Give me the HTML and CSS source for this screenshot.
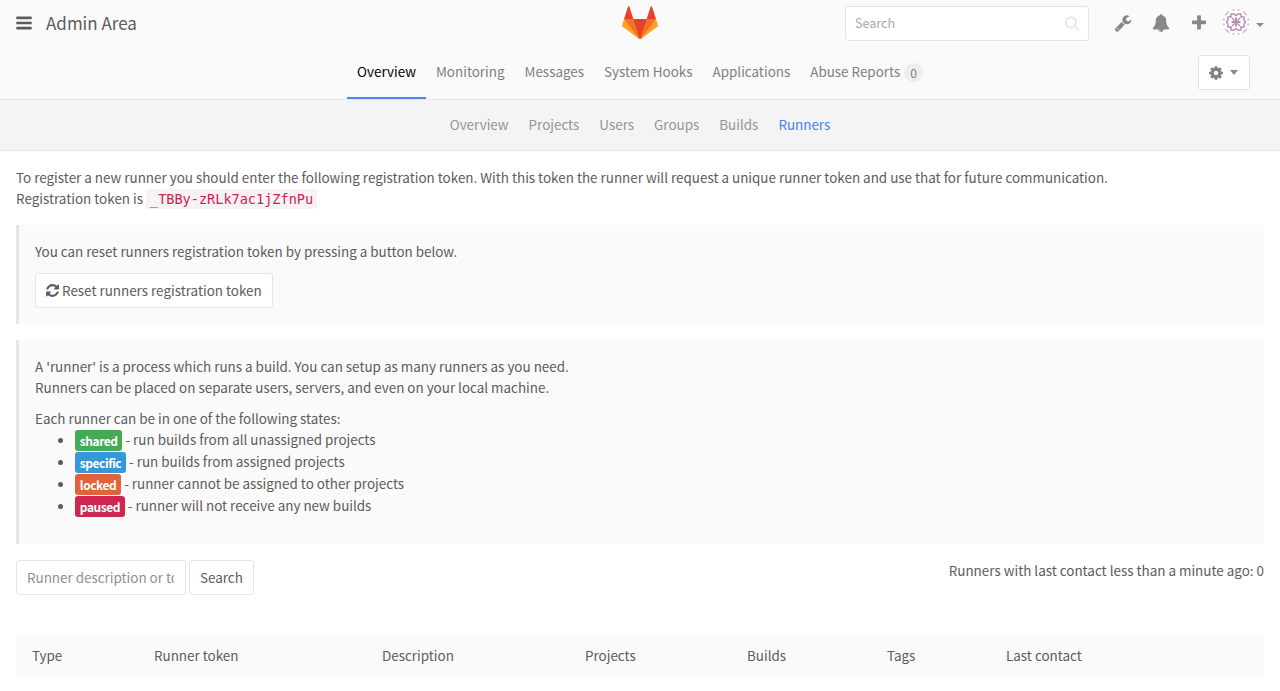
FILE: index.html
```html
<!DOCTYPE html>
<html lang="en">
<head>
<meta charset="utf-8">
<title>Runners · Admin Area</title>
<link rel="stylesheet" href="styles.css">
</head>
<body>
<header class="navbar">
  <div class="navbar-left">
    <svg class="icon icon-bars" viewBox="0 0 1792 1792"><path d="M1664 1344v128q0 26-19 45t-45 19h-1408q-26 0-45-19t-19-45v-128q0-26 19-45t45-19h1408q26 0 45 19t19 45zm0-512v128q0 26-19 45t-45 19h-1408q-26 0-45-19t-19-45v-128q0-26 19-45t45-19h1408q26 0 45 19t19 45zm0-512v128q0 26-19 45t-45 19h-1408q-26 0-45-19t-19-45v-128q0-26 19-45t45-19h1408q26 0 45 19t19 45z"/></svg>
    <h1 class="title">Admin Area</h1>
  </div>
  <svg class="logo" viewBox="0 0 36 36">
    <path fill="#e24329" d="M2 14l9.38 9v-9l-4-12.28c-.205-.632-1.176-.632-1.38 0z"/>
    <path fill="#e24329" d="M34 14l-9.38 9v-9l4-12.28c.205-.632 1.176-.632 1.38 0z"/>
    <path fill="#e24329" d="M18 34.38L3 14h30z"/>
    <path fill="#fc6d26" d="M18 34.38L11.38 14H2l4 11z"/>
    <path fill="#fc6d26" d="M18 34.38L24.62 14H34l-4 11z"/>
    <path fill="#fca326" d="M2 14L.1 20.16c-.18.565 0 1.2.5 1.56l17.42 12.66z"/>
    <path fill="#fca326" d="M34 14l1.9 6.16c.18.565 0 1.2-.5 1.56L18 34.38z"/>
  </svg>
  <div class="navbar-right">
    <div class="search-box">
      <span class="search-text">Search</span>
      <svg class="icon icon-search" viewBox="0 0 1792 1792"><path d="M1216 832q0-185-131.5-316.5t-316.5-131.5-316.5 131.5-131.5 316.5 131.5 316.5 316.5 131.5 316.5-131.5 131.5-316.5zm512 832q0 52-38 90t-90 38q-54 0-90-38l-343-342q-179 124-399 124-143 0-273.5-55.5t-225-150-150-225-55.5-273.5 55.5-273.5 150-225 225-150 273.5-55.5 273.5 55.5 225 150 150 225 55.5 273.5q0 220-124 399l343 343q37 37 37 90z"/></svg>
    </div>
    <svg class="icon icon-nav" viewBox="0 0 1792 1792"><path d="M448 1472q0-26-19-45t-45-19-45 19-19 45 19 45 45 19 45-19 19-45zm644-420l-682 682q-37 37-90 37-52 0-91-37l-106-108q-38-36-38-90 0-53 38-91l681-681q39 98 114.5 173.5t173.5 114.5zm634-435q0 39-23 106-47 134-164.5 217.5t-258.5 83.5q-185 0-316.5-131.5t-131.5-316.5 131.5-316.5 316.5-131.5q58 0 121.5 16.5t107.5 46.5q16 11 16 28t-16 28l-293 169v224l193 107q5-3 79-48.5t135.5-81 70.5-35.5q15 0 23.5 10t8.5 25z"/></svg>
    <svg class="icon icon-nav" viewBox="0 0 1792 1792"><path d="M912 1696q0-16-16-16-59 0-101.5-42.5t-42.5-101.5q0-16-16-16t-16 16q0 73 51.5 124.5t124.5 51.5q16 0 16-16zm816-288q0 52-38 90t-90 38h-448q0 106-75 181t-181 75-181-75-75-181h-448q-52 0-90-38t-38-90q50-42 91-88t85-119.5 74.5-158.5 50-206 19.5-260q0-152 117-282.5t307-158.5q-8-19-8-39 0-40 28-68t68-28 68 28 28 68q0 20-8 39 190 28 307 158.5t117 282.5q0 139 19.5 260t50 206 74.5 158.5 85 119.5 91 88z"/></svg>
    <svg class="icon icon-nav" viewBox="0 0 1792 1792"><path d="M1600 736v192q0 40-28 68t-68 28h-416v416q0 40-28 68t-68 28h-192q-40 0-68-28t-28-68v-416h-416q-40 0-68-28t-28-68v-192q0-40 28-68t68-28h416v-416q0-40 28-68t68-28h192q40 0 68 28t28 68v416h416q40 0 68 28t28 68z"/></svg>
    <svg class="avatar" viewBox="0 0 26 26">
      <defs><clipPath id="round"><circle cx="13" cy="13" r="13"/></clipPath></defs>
      <g clip-path="url(#round)">
        <rect width="26" height="26" fill="#fff"/>
        <g fill="none" stroke="#b68bb0" stroke-width="1.4">
          <path d="M8 5h3l2 1.500L15 5h3v3h3v3l1.500 2L21 15v3h-3v3h-3l-2-1.500L11 21H8v-3H5v-3l-1.500-2L5 11V8h3z"/>
          <path d="M13 8.500v9M8.500 13h9" stroke-width="2"/>
          <path d="M9 9l2.500 2.500M17 9l-2.500 2.500M9 17l2.500-2.500M17 17l-2.500-2.500"/>
          <path d="M2 6l4-4M20 2l4 4M2 20l4 4M24 20l-4 4M9.500.8h2M14.500.8h2M9.500 25.200h2M14.500 25.200h2M.8 9.500v2M.8 14.500v2M25.200 9.500v2M25.200 14.500v2" stroke-width="1.200"/>
        </g>
      </g>
    </svg>
    <span class="caret caret-user"></span>
  </div>
</header>

<nav class="layout-nav">
  <ul class="nav-links">
    <li class="active">Overview</li>
    <li>Monitoring</li>
    <li>Messages</li>
    <li>System Hooks</li>
    <li>Applications</li>
    <li>Abuse Reports<span class="badge">0</span></li>
  </ul>
  <button class="btn btn-settings">
    <svg class="icon icon-cog" viewBox="0 0 1792 1792"><path d="M1152 896q0-106-75-181t-181-75-181 75-75 181 75 181 181 75 181-75 75-181zm512-109v222q0 12-8 23t-20 13l-185 28q-19 54-39 91 35 50 107 138 10 12 10 25t-9 23q-27 37-99 108t-94 71q-12 0-26-9l-138-108q-44 23-91 38-16 136-29 186-7 28-36 28h-222q-14 0-24.500-8.500t-11.500-21.500l-28-184q-49-16-90-37l-141 107q-10 9-25 9-14 0-25-11-126-114-165-168-7-10-7-23 0-12 8-23 15-21 51-66.500t54-70.500q-27-50-41-99l-183-27q-13-2-21-12.500t-8-23.500v-222q0-12 8-23t19-13l186-28q14-46 39-92-40-57-107-138-10-12-10-24 0-10 9-23 26-36 98.500-107.500t94.500-71.500q13 0 26 10l138 107q44-23 91-38 16-136 29-186 7-28 36-28h222q14 0 24.500 8.500t11.500 21.500l28 184q49 16 90 37l142-107q9-9 24-9 13 0 25 10 129 119 165 170 7 8 7 22 0 12-8 23-15 21-51 66.500t-54 70.500q26 50 41 98l183 28q13 2 21 12.500t8 23.500z"/></svg>
    <span class="caret"></span>
  </button>
</nav>

<nav class="sub-nav">
  <ul class="nav-links">
    <li>Overview</li>
    <li>Projects</li>
    <li>Users</li>
    <li>Groups</li>
    <li>Builds</li>
    <li class="current">Runners</li>
  </ul>
</nav>

<main class="content">
  <p class="intro">To register a new runner you should enter the following registration token. With this token the runner will request a unique runner token and use that for future communication.<br>Registration token is <code>_TBBy-zRLk7ac1jZfnPu</code></p>

  <section class="callout callout-reset">
    <p>You can reset runners registration token by pressing a button below.</p>
    <button class="btn btn-reset">
      <svg class="icon icon-refresh" viewBox="0 0 1792 1792"><path d="M1639 1056q0 5-1 7-64 268-268 434.500t-478 166.500q-146 0-282.500-55t-243.500-157l-129 129q-19 19-45 19t-45-19-19-45v-448q0-26 19-45t45-19h448q26 0 45 19t19 45-19 45l-137 137q71 66 161 102t187 36q134 0 250-65t186-179q11-17 53-117 8-23 30-23h192q13 0 22.500 9.500t9.500 22.500zm25-800v448q0 26-19 45t-45 19h-448q-26 0-45-19t-19-45 19-45l138-138q-148-137-349-137-134 0-250 65t-186 179q-11 17-53 117-8 23-30 23h-199q-13 0-22.500-9.500t-9.500-22.500v-7q65-268 270-434.500t480-166.500q146 0 284 55.500t245 156.500l130-129q19-19 45-19t45 19 19 45z"/></svg>
      <span>Reset runners registration token</span>
    </button>
  </section>

  <section class="callout callout-states">
    <p>A 'runner' is a process which runs a build. You can setup as many runners as you need.<br>Runners can be placed on separate users, servers, and even on your local machine.</p>
    <p class="states-title">Each runner can be in one of the following states:</p>
    <ul class="states">
      <li><span class="label label-shared">shared</span> - run builds from all unassigned projects</li>
      <li><span class="label label-specific">specific</span> - run builds from assigned projects</li>
      <li><span class="label label-locked">locked</span> - runner cannot be assigned to other projects</li>
      <li><span class="label label-paused">paused</span> - runner will not receive any new builds</li>
    </ul>
  </section>

  <div class="toolbar">
    <form class="filter">
      <input class="filter-input" type="text" placeholder="Runner description or token">
      <button class="btn btn-search" type="button">Search</button>
    </form>
    <span class="contact">Runners with last contact less than a minute ago: 0</span>
  </div>

  <table class="runners">
    <colgroup><col class="c-type"><col class="c-token"><col class="c-desc"><col class="c-proj"><col class="c-builds"><col class="c-tags"><col></colgroup>
    <tr><th>Type</th><th>Runner token</th><th>Description</th><th>Projects</th><th>Builds</th><th>Tags</th><th>Last contact</th></tr>
  </table>
</main>
</body>
</html>
```
FILE: styles.css
```css
* { box-sizing: border-box; }

body {
  margin: 0;
  background: #fff;
  color: #5c5c5c;
  font: 13.435px/21px "Noto Sans CJK SC", "Open Sans", sans-serif;
}

p, ul, h1 { margin: 0; padding: 0; }

.icon { display: block; fill: currentColor; flex: none; }

.caret {
  border-top: 5px solid #8a8a8a;
  border-left: 4.5px solid transparent;
  border-right: 4.5px solid transparent;
}

.navbar {
  display: grid;
  grid-template-columns: 1fr 36px 1fr;
  height: 50px;
  background: #fafafa;
}
.navbar-left { display: flex; align-items: center; padding: 0 0 4px 15px; }
.icon-bars { width: 18px; height: 18px; }
.title { margin-left: 13px; font-size: 17px; font-weight: 400; line-height: 24px; }
.logo { width: 36px; height: 36px; margin-top: 5px; }
.navbar-right { display: flex; align-items: center; justify-content: flex-end; padding: 0 16px 4px 0; color: #888; }
.search-box {
  display: flex;
  align-items: center;
  justify-content: space-between;
  width: 244px;
  height: 35px;
  margin-right: 25px;
  padding: 0 8px 0 9px;
  border: 1px solid #e5e5e5;
  border-radius: 3px;
  background: #fff;
}
.search-text { margin-top: -1px; color: #a8a8a0; font-size: 12.6px; }
.icon-search { width: 16px; height: 16px; color: #e7e9ed; }
.icon-nav { width: 18px; height: 18px; margin: -1px 20px 0 0; }
.avatar { width: 26px; height: 26px; margin: -2px 0 0 -5px; }
.caret-user { margin: 3px 0 0 7px; border-width: 4px 4px 0; }

.layout-nav {
  position: relative;
  height: 50px;
  border-bottom: 1px solid #e5e5e5;
  background: #fafafa;
}
.nav-links { display: flex; justify-content: center; list-style: none; }
.nav-links li { padding: 0 10px; }
.layout-nav li { height: 49px; padding-top: 11px; color: #7f7f7f; }
.layout-nav .active { border-bottom: 2px solid #4688f1; color: #000; }
.badge {
  display: inline-block;
  margin-left: 4px;
  padding: 1px 6px 0;
  border-radius: 10px;
  background: #eee;
  font-size: 12px;
  line-height: 18px;
  vertical-align: -1px;
}
.btn {
  display: flex;
  align-items: center;
  height: 35px;
  padding: 0 10px;
  border: 1px solid #e5e5e5;
  border-radius: 3px;
  background: #fff;
  color: inherit;
  font: inherit;
}
.btn-settings { position: absolute; top: 5px; right: 30px; width: 52px; padding: 0 9px; gap: 6px; color: #7f7f7f; }
.icon-cog { width: 16px; height: 16px; }

.sub-nav {
  height: 51px;
  padding-top: 14px;
  border-bottom: 1px solid #e5e5e5;
  background: #f4f4f4;
  color: #959595;
}
.sub-nav .current { color: #4a82ef; }

.content { padding: 16px 16px 0; }
code {
  padding: 2px 4px;
  border-radius: 3px;
  background: #f9f2f4;
  color: #c7254e;
  font: 13.55px "DejaVu Sans Mono", monospace;
}

.callout { margin-top: 16px; padding: 16px; border-left: 3px solid #e5e5e5; background: #fafafa; }
.callout-reset { height: 99px; }
.btn-reset { margin-top: 11px; padding-left: 9px; }
.icon-refresh { width: 15px; height: 15px; margin-right: 2px; }
.callout-states { height: 204px; }
.states-title { margin-top: 10px; }
.states { padding-left: 40px; }
.states li { height: 22px; }
.label {
  display: inline-block;
  height: 21px;
  margin-top: 1px;
  padding: 0 4.8px;
  border-radius: 3px;
  color: #fff;
  font-size: 12px;
  font-weight: 700;
  letter-spacing: -0.45px;
  vertical-align: top;
}
.label-shared { background: #44aa55; }
.label-specific { background: #3498db; }
.label-locked { background: #e1623b; }
.label-paused { background: #ce2752; }

.toolbar { display: flex; justify-content: space-between; margin-top: 16px; }
.filter { display: flex; gap: 3px; }
.filter-input {
  width: 170px;
  height: 35px;
  padding: 0 11px 2px 10px;
  border: 1px solid #e5e5e5;
  border-radius: 3px;
  background: #fff;
  color: #5c5c5c;
  font: inherit;
}
.filter-input::placeholder { color: #8f8f8f; }

.runners { width: 100%; margin-top: 41px; border-collapse: collapse; table-layout: fixed; }
.runners th { height: 40px; padding: 0 16px 1px; background: #fafafa; font-weight: 400; text-align: left; }
.c-type { width: 122px; }
.c-token { width: 228px; }
.c-desc { width: 203px; }
.c-proj { width: 162px; }
.c-builds { width: 140px; }
.c-tags { width: 119px; }
```
